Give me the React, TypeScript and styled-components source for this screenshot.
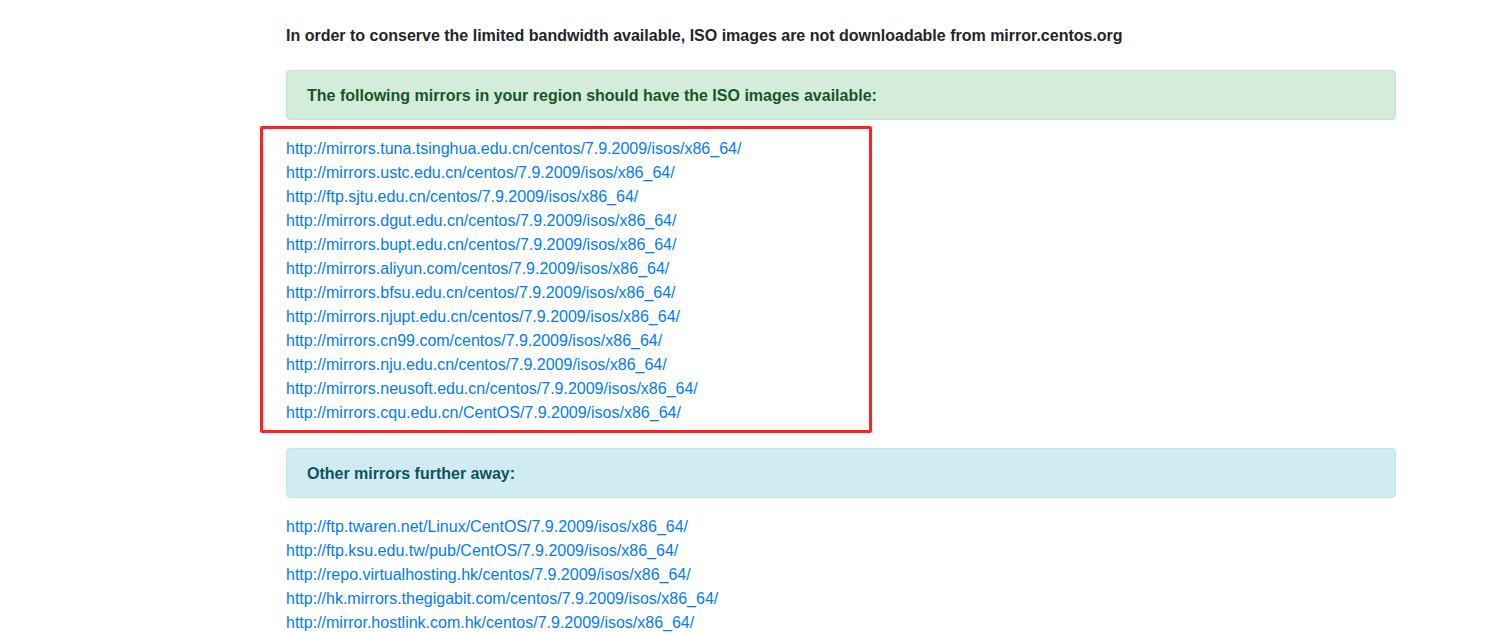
import styled, { createGlobalStyle } from 'styled-components';

const GlobalStyle = createGlobalStyle`
    body {
        margin: 0;
        background: #fff;
        font-family: "Liberation Sans", Arial, sans-serif;
        font-size: 16px;
        line-height: 24px;
        color: #212529;
    }
`;

const Page = styled.div`
    padding: 24px 116px 0 286px;
`;

const Lead = styled.p`
    margin: 0 0 22px;
    font-weight: 700;
`;

const Alert = styled.div<{ $tone: 'success' | 'info' }>`
    padding: 13px 20px 11px;
    border: 1px solid ${(p) => (p.$tone === 'success' ? '#c3e6cb' : '#bee5eb')};
    border-radius: 4px;
    background: ${(p) => (p.$tone === 'success' ? '#d4edda' : '#d1ecf1')};
    color: ${(p) => (p.$tone === 'success' ? '#155724' : '#0c5460')};
    font-weight: 700;
`;

const Highlight = styled.div`
    width: 612px;
    box-sizing: border-box;
    margin: 6px 0 15px -26px;
    padding: 8px 0 5px 23px;
    border: 3px solid #ff2020;
    border-radius: 2px;
`;

const LinkList = styled.div<{ $top?: number }>`
    display: flex;
    flex-direction: column;
    align-items: flex-start;
    margin-top: ${(p) => p.$top ?? 0}px;
`;

const MirrorLink = styled.a`
    color: #007bff;
    text-decoration: none;
`;

const near = [
    'http://mirrors.tuna.tsinghua.edu.cn/centos/7.9.2009/isos/x86_64/',
    'http://mirrors.ustc.edu.cn/centos/7.9.2009/isos/x86_64/',
    'http://ftp.sjtu.edu.cn/centos/7.9.2009/isos/x86_64/',
    'http://mirrors.dgut.edu.cn/centos/7.9.2009/isos/x86_64/',
    'http://mirrors.bupt.edu.cn/centos/7.9.2009/isos/x86_64/',
    'http://mirrors.aliyun.com/centos/7.9.2009/isos/x86_64/',
    'http://mirrors.bfsu.edu.cn/centos/7.9.2009/isos/x86_64/',
    'http://mirrors.njupt.edu.cn/centos/7.9.2009/isos/x86_64/',
    'http://mirrors.cn99.com/centos/7.9.2009/isos/x86_64/',
    'http://mirrors.nju.edu.cn/centos/7.9.2009/isos/x86_64/',
    'http://mirrors.neusoft.edu.cn/centos/7.9.2009/isos/x86_64/',
    'http://mirrors.cqu.edu.cn/CentOS/7.9.2009/isos/x86_64/',
];

const far = [
    'http://ftp.twaren.net/Linux/CentOS/7.9.2009/isos/x86_64/',
    'http://ftp.ksu.edu.tw/pub/CentOS/7.9.2009/isos/x86_64/',
    'http://repo.virtualhosting.hk/centos/7.9.2009/isos/x86_64/',
    'http://hk.mirrors.thegigabit.com/centos/7.9.2009/isos/x86_64/',
    'http://mirror.hostlink.com.hk/centos/7.9.2009/isos/x86_64/',
];

const App = () => (
    <>
        <GlobalStyle />
        <Page>
            <Lead>In order to conserve the limited bandwidth available, ISO images are not downloadable from mirror.centos.org</Lead>
            <Alert $tone='success'>The following mirrors in your region should have the ISO images available:</Alert>
            <Highlight>
                <LinkList>
                    {near.map((url) => (
                        <MirrorLink key={url} href={url}>
                            {url}
                        </MirrorLink>
                    ))}
                </LinkList>
            </Highlight>
            <Alert $tone='info'>Other mirrors further away:</Alert>
            <LinkList $top={17}>
                {far.map((url) => (
                    <MirrorLink key={url} href={url}>
                        {url}
                    </MirrorLink>
                ))}
            </LinkList>
        </Page>
    </>
);

export default App;
